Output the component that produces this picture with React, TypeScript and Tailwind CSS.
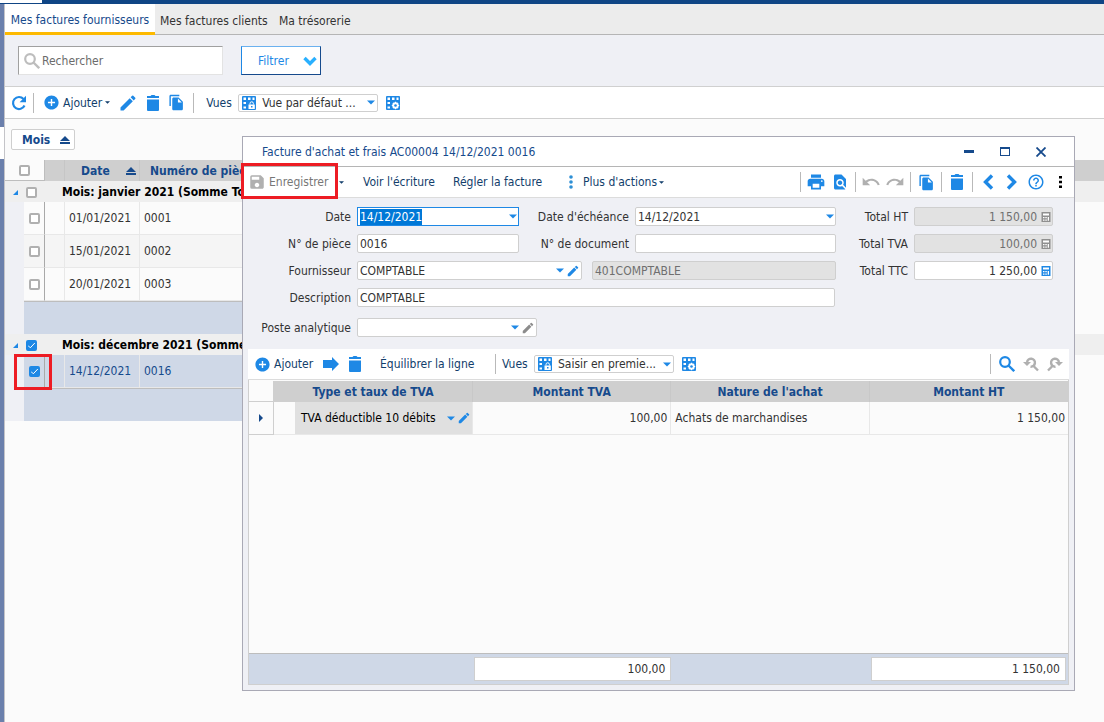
import { useEffect, useRef } from 'react';
import type { ReactNode } from 'react';
import {
  MdAddCircle,
  MdEdit,
  MdFileCopy,
  MdFindInPage,
  MdHelpOutline,
  MdPrint,
  MdRedo,
  MdSave,
  MdUndo,
} from 'react-icons/md';

const janvier = [
  { date: '01/01/2021', piece: '0001' },
  { date: '15/01/2021', piece: '0002' },
  { date: '20/01/2021', piece: '0003' },
];

function Caret({ className = '' }: { className?: string }) {
  return (
    <svg viewBox="0 0 8 5" className={`h-[5px] w-2 shrink-0 fill-current ${className}`}>
      <path d="M0 0.500h8L4 4.500z" />
    </svg>
  );
}

function SmallCaret() {
  return (
    <svg viewBox="0 0 6 3" className="h-[3px] w-[5px] shrink-0 fill-current">
      <path d="M0 0h6L3 3z" />
    </svg>
  );
}

function Trash() {
  return (
    <svg viewBox="0 0 14 16" className="h-4 w-3.5 fill-current">
      <path d="M1 1h3.500l1-1h3l1 1H13v2H1zM1 4.500h12V15a1 1 0 0 1-1 1H2a1 1 0 0 1-1-1z" />
    </svg>
  );
}

function Refresh() {
  return (
    <svg viewBox="0 0 16 16" className="size-4 fill-none stroke-current">
      <path d="M13.500 10.500A6 6 0 1 1 12.500 4" strokeWidth="2.200" />
      <path d="M15 0.800v6.400H8.600z" fill="currentColor" stroke="none" />
    </svg>
  );
}

function Magnifier() {
  return (
    <svg viewBox="0 0 16 16" className="size-4 shrink-0 fill-none stroke-current">
      <circle cx="6" cy="6" r="4.800" strokeWidth="2.200" />
      <path d="M9.500 9.500L15.200 15.200" strokeWidth="2.400" />
    </svg>
  );
}

function Chevron({ d, className = '' }: { d: string; className?: string }) {
  return (
    <svg viewBox="0 0 16 16" className={`size-4 shrink-0 fill-none stroke-current ${className}`}>
      <path d={d} strokeWidth="3.400" />
    </svg>
  );
}

function Dots({ className = '' }: { className?: string }) {
  return (
    <svg viewBox="0 0 4 14" className={`h-3.5 w-1 shrink-0 fill-current ${className}`}>
      <circle cx="2" cy="2" r="1.800" />
      <circle cx="2" cy="7" r="1.800" />
      <circle cx="2" cy="12" r="1.800" />
    </svg>
  );
}

function SortIcon() {
  return (
    <svg viewBox="0 0 10 8" className="h-2 w-2.5 shrink-0 fill-current">
      <path d="M5 0l5 5H0zM0 6h10v2H0z" />
    </svg>
  );
}

// Grid of cells with either a padlock or a cog in the bottom corner
function GridIcon({ kind }: { kind: 'lock' | 'cog' }) {
  return (
    <svg viewBox="0 0 14 14" className="size-3.5 shrink-0">
      <rect width="14" height="14" rx="1" fill="#1e88e5" />
      <path
        d="M1.500 1.500h2.500v2.500H1.500zM6 1.500h2.500v2.500H6zM10.500 1.500h2v2.500h-2zM1.500 6h2.500v2H1.500zM1.500 10.500h2.500v2H1.500z"
        fill="#fff"
      />
      {kind === 'lock' ? (
        <>
          <path d="M8 8.500V7.500a1.700 1.700 0 0 1 3.400 0v1" fill="none" stroke="#fff" strokeWidth="1" />
          <rect x="6.500" y="8.500" width="6.300" height="4.500" fill="#fff" />
          <rect x="9" y="10" width="1.500" height="1.500" fill="#1e88e5" />
        </>
      ) : (
        <>
          <circle cx="9.500" cy="9.500" r="2.300" fill="none" stroke="#fff" strokeWidth="1.800" />
          <path d="M9.500 5.800v7.400M5.800 9.500h7.400M7 7l5 5M12 7l-5 5" stroke="#fff" strokeWidth="1.200" />
          <circle cx="9.500" cy="9.500" r="1.300" fill="#1e88e5" />
        </>
      )}
    </svg>
  );
}

function Calculator({ className = '' }: { className?: string }) {
  return (
    <svg viewBox="0 0 10 10" className={`ml-0.5 size-2.5 shrink-0 ${className}`}>
      <path d="M0.500 0h9v10h-9z" fill="currentColor" />
      <path d="M2 1.500h6v2H2zM2 5h1.500v1.200H2zM4.300 5h1.500v1.200H4.300zM2 7.500h1.500v1.200H2zM4.300 7.500h1.500v1.200H4.300zM6.700 5H8v3.700H6.700z" fill="#fff" />
    </svg>
  );
}

function SearchTurn({ flip = false }: { flip?: boolean }) {
  return (
    <svg viewBox="0 0 16 16" className={`size-4 fill-none stroke-current ${flip ? '-scale-x-100' : ''}`}>
      <path d="M4 6a4 4 0 1 1 3.500 4.700M10 9.500L15 14.500" strokeWidth="2.400" />
      <path d="M0 6h8L4 10z" fill="currentColor" stroke="none" />
    </svg>
  );
}

function Separator({ className = '' }: { className?: string }) {
  return <span className={`h-5 w-px shrink-0 bg-[#b9b9b9] ${className}`} />;
}

function Check({ label, checked = false }: { label: string; checked?: boolean }) {
  return (
    <input
      type="checkbox"
      aria-label={label}
      defaultChecked={checked}
      className="block size-[11px] appearance-none rounded-xs border-2 border-[#b0b0b0] bg-white checked:border-[#1e88e5] checked:bg-[#1e88e5] checked:bg-[url('data:image/svg+xml,%3Csvg%20xmlns=%22http://www.w3.org/2000/svg%22%20viewBox=%220%200%207%207%22%3E%3Cpath%20d=%22M0%203.5l2.3%202.3L6.800%201%22%20fill=%22none%22%20stroke=%22white%22/%3E%3C/svg%3E')]"
    />
  );
}

function Label({ id, className, children }: { id: string; className: string; children: ReactNode }) {
  return (
    <label htmlFor={id} className={`shrink-0 pr-1.5 text-right text-[#333] ${className}`}>
      {children}
    </label>
  );
}

type FieldProps = {
  id: string;
  value?: string;
  width: string;
  disabled?: boolean;
  right?: boolean;
  label?: string;
  children?: ReactNode;
};

function Field({ id, value = '', width, disabled = false, right = false, label, children }: FieldProps) {
  return (
    <div
      className={`flex h-[19px] shrink-0 items-center gap-0.5 rounded-xs border border-[#cfcfcf] pr-px ${width} ${
        disabled ? 'bg-[#e2e2e2] text-[#6f6f6f]' : 'bg-white text-[#333]'
      }`}
    >
      <input
        id={id}
        type="text"
        aria-label={label}
        defaultValue={value}
        disabled={disabled}
        className={`h-4 w-full min-w-0 pl-0.5 outline-none ${right ? 'text-right' : ''}`}
      />
      {children}
    </div>
  );
}

function DateField() {
  const ref = useRef<HTMLInputElement>(null);

  useEffect(() => {
    ref.current?.focus();
    ref.current?.select();
  }, []);

  return (
    <div className="flex h-[19px] w-[162px] shrink-0 items-center gap-1 border border-[#1e88e5] bg-white pr-px">
      <input
        id="date"
        ref={ref}
        type="text"
        defaultValue="14/12/2021"
        className="h-4 w-full min-w-0 pl-0.5 text-[#333] outline-none selection:bg-[#0078d7] selection:text-white"
      />
      <Caret className="text-[#1e88e5]" />
    </div>
  );
}

function ViewSelect({ id, value }: { id: string; value: string }) {
  return (
    <div className="flex h-[18px] w-[140px] shrink-0 items-center gap-1.5 rounded-xs border border-[#cfcfcf] bg-white pr-0.5 pl-[3px]">
      <GridIcon kind="lock" />
      <select id={id} className="h-4 w-full min-w-0 appearance-none text-[#333] outline-none">
        <option>{value}</option>
      </select>
      <Caret className="text-[#1e88e5]" />
    </div>
  );
}

function GroupRow({ title, checked = false }: { title: string; checked?: boolean }) {
  return (
    <tr className="h-[21px] bg-[#efefef]">
      <td colSpan={3} className="p-0">
        <div className="flex items-center gap-2 pt-0.5 pl-2">
          <svg viewBox="0 0 6 6" className="size-[5px] fill-[#1e88e5]">
            <path d="M6 0v6H0z" />
          </svg>
          <Check label={title} checked={checked} />
        </div>
      </td>
      <td colSpan={3} className="p-0">
        <div className="-ml-[3px] whitespace-nowrap font-bold text-black">{title}</div>
      </td>
    </tr>
  );
}

function BandRow() {
  return (
    <tr className="h-[33px]">
      <td className="bg-[#eff0f5] p-0" />
      <td colSpan={4} className="border-t border-[#bdbdbd] bg-[#cfd8e7] p-0" />
      <td className="p-0" />
    </tr>
  );
}

type InvoiceRowProps = { date: string; piece: string; selected?: boolean; alt?: boolean };

function InvoiceRow({ date, piece, selected = false, alt = false }: InvoiceRowProps) {
  const bg = selected ? 'bg-[#cfd8e7] text-[#164a8c]' : alt ? 'bg-[#f5f5f5] text-[#333]' : 'bg-[#fbfbfb] text-[#333]';
  return (
    <tr className="h-[33px]">
      <td className="bg-[#eff0f5] p-0" />
      <td className={`relative border-r border-b border-r-[#a9a9a9] border-b-[#e8e8e8] p-0 ${bg}`}>
        <div className="flex justify-center">
          <Check label={`Facture ${piece}`} checked={selected} />
        </div>
        {selected && <span className="absolute -top-px -left-2.5 h-9 w-[38px] border-3 border-[#ed1c24]" />}
      </td>
      <td className={`border-r border-b border-[#e8e8e8] p-0 ${bg}`} />
      <td className={`border-r border-b border-[#e8e8e8] p-0 pl-1 ${bg}`}>{date}</td>
      <td className={`border-b border-[#e8e8e8] p-0 pl-1 ${bg}`}>{piece}</td>
      <td className="p-0" />
    </tr>
  );
}

function InvoiceTable() {
  return (
    <table className="w-full table-fixed border-separate border-spacing-0">
      <colgroup>
        <col className="w-[19px]" />
        <col className="w-[21px]" />
        <col className="w-5" />
        <col className="w-[75px]" />
        <col />
        <col className="w-16" />
      </colgroup>
      <thead>
        <tr className="h-[21px] bg-[#cfcfcf] text-left text-[#164a8c]">
          <th colSpan={2} className="border-r border-b border-[#bdbdbd] bg-[#fbfbfb] p-0">
            <div className="flex justify-center">
              <Check label="Tout sélectionner" />
            </div>
          </th>
          <th className="border-r border-[#c6c6c6] p-0" />
          <th className="border-r border-[#c6c6c6] p-0">
            <div className="flex items-center justify-between pr-[3px] pl-4">
              Date
              <SortIcon />
            </div>
          </th>
          <th colSpan={2} className="p-0 pl-2.5 whitespace-nowrap">
            Numéro de pièce
          </th>
        </tr>
      </thead>
      <tbody>
        <GroupRow title="Mois: janvier 2021 (Somme To" />
        {janvier.map((row, i) => (
          <InvoiceRow key={row.piece} {...row} alt={i % 2 === 1} />
        ))}
        <BandRow />
        <GroupRow title="Mois: décembre 2021 (Somme" checked />
        <InvoiceRow date="14/12/2021" piece="0016" selected />
        <BandRow />
      </tbody>
    </table>
  );
}

function TitleBar() {
  return (
    <header className="flex h-[30px] items-center border-b border-[#b5b5b5] bg-white pr-[27px] pl-[19px] text-[#164a8c]">
      <h2 className="flex-1">Facture d'achat et frais AC00004 14/12/2021 0016</h2>
      <div className="flex items-center gap-6">
        <button type="button" aria-label="Réduire" className="flex w-3 justify-center">
          <span className="h-[3px] w-2.5 bg-current" />
        </button>
        <button type="button" aria-label="Agrandir" className="flex w-3 justify-center">
          <span className="h-[9px] w-2.5 border border-t-2 border-current" />
        </button>
        <button type="button" aria-label="Fermer" className="flex w-3 justify-center">
          <svg viewBox="0 0 10 10" className="size-2.5 fill-none stroke-current">
            <path d="M0.500 0.500l9 9M9.500 0.500l-9 9" strokeWidth="1.800" />
          </svg>
        </button>
      </div>
    </header>
  );
}

function ToolButton({ label, className = '', children }: { label: string; className?: string; children: ReactNode }) {
  return (
    <button type="button" aria-label={label} className={`flex w-6 shrink-0 items-center justify-center ${className}`}>
      {children}
    </button>
  );
}

function DialogToolbar() {
  return (
    <div className="flex h-[31px] items-center border-b border-[#dcdcdc] bg-white pr-0.5 pl-[5px] text-[#123e6b]">
      <div className="relative flex items-center">
        <button type="button" className="flex w-[86px] items-center gap-[3px] text-[#777]">
          <MdSave className="size-[18px] shrink-0 text-[#b0b0b0]" />
          Enregistrer
        </button>
        <span className="absolute -top-2.5 -left-[7px] h-9 w-[97px] border-3 border-[#ed1c24]" />
      </div>
      <button type="button" aria-label="Options d'enregistrement" className="ml-[5px]">
        <SmallCaret />
      </button>
      <div className="ml-[19px] flex flex-1 items-center">
        <button type="button" className="w-[90px] text-left whitespace-nowrap">Voir l'écriture</button>
        <button type="button" className="w-[116px] text-left whitespace-nowrap">Régler la facture</button>
        <button type="button" className="flex items-center gap-2.5 whitespace-nowrap">
          <Dots className="text-[#2d8fd5]" />
          <span className="flex items-center gap-0.5">
            Plus d'actions
            <SmallCaret />
          </span>
        </button>
      </div>
      <div className="flex items-center text-[#1e88e5]">
        <Separator className="mx-[3px]" />
        <ToolButton label="Imprimer"><MdPrint className="size-5" /></ToolButton>
        <ToolButton label="Aperçu"><MdFindInPage className="size-[18px]" /></ToolButton>
        <Separator className="mx-[3px]" />
        <ToolButton label="Annuler" className="text-[#b0b0b0]"><MdUndo className="size-5" /></ToolButton>
        <ToolButton label="Rétablir" className="text-[#b0b0b0]"><MdRedo className="size-5" /></ToolButton>
        <Separator className="mx-[3px]" />
        <ToolButton label="Dupliquer"><MdFileCopy className="size-[17px]" /></ToolButton>
        <Separator className="mx-[3px]" />
        <ToolButton label="Supprimer"><Trash /></ToolButton>
        <Separator className="mx-[3px]" />
        <ToolButton label="Précédent"><Chevron d="M12 1.500L5.500 8l6.500 6.500" /></ToolButton>
        <ToolButton label="Suivant"><Chevron d="M4 1.500L10.500 8L4 14.500" /></ToolButton>
        <ToolButton label="Aide"><MdHelpOutline className="size-[18px]" /></ToolButton>
        <ToolButton label="Plus" className="text-black">
          <svg viewBox="0 0 3 12" className="h-3 w-[3px] fill-current">
            <path d="M0 0h3v2.500H0zM0 4.700h3v2.500H0zM0 9.500h3V12H0z" />
          </svg>
        </ToolButton>
      </div>
    </div>
  );
}

function InvoiceForm() {
  return (
    <form className="flex pt-[9px] pb-3">
      <div>
        <div className="flex flex-col gap-2">
          <div className="flex items-center">
            <Label id="date" className="w-[114px]">Date</Label>
            <DateField />
            <Label id="echeance" className="w-[116px]">Date d'échéance</Label>
            <Field id="echeance" value="14/12/2021" width="w-[201px]">
              <Caret className="text-[#1e88e5]" />
            </Field>
          </div>
          <div className="flex items-center">
            <Label id="piece" className="w-[114px]">N° de pièce</Label>
            <Field id="piece" value="0016" width="w-[162px]" />
            <Label id="document" className="w-[116px]">N° de document</Label>
            <Field id="document" width="w-[201px]" />
          </div>
          <div className="flex items-center">
            <Label id="fournisseur" className="w-[114px]">Fournisseur</Label>
            <Field id="fournisseur" value="COMPTABLE" width="w-[225px]">
              <Caret className="text-[#1e88e5]" />
              <MdEdit className="size-3.5 shrink-0 text-[#1e88e5]" />
            </Field>
            <div className="w-2.5" />
            <Field id="compte" label="Compte fournisseur" value="401COMPTABLE" width="w-[244px]" disabled />
          </div>
          <div className="flex items-center">
            <Label id="description" className="w-[114px]">Description</Label>
            <Field id="description" value="COMPTABLE" width="w-[478px]" />
          </div>
        </div>
        <div className="mt-[11px] flex items-center">
          <Label id="poste" className="w-[114px]">Poste analytique</Label>
          <Field id="poste" width="w-[180px]">
            <Caret className="text-[#1e88e5]" />
            <MdEdit className="size-3.5 shrink-0 text-[#8c8c8c]" />
          </Field>
        </div>
      </div>
      <div className="flex flex-col gap-2">
        <div className="flex items-center">
          <Label id="ht" className="w-[78px]">Total HT</Label>
          <Field id="ht" value="1 150,00" width="w-[139px]" right disabled>
            <Calculator className="text-[#8f8f8f]" />
          </Field>
        </div>
        <div className="flex items-center">
          <Label id="tva" className="w-[78px]">Total TVA</Label>
          <Field id="tva" value="100,00" width="w-[139px]" right disabled>
            <Calculator className="text-[#8f8f8f]" />
          </Field>
        </div>
        <div className="flex items-center">
          <Label id="ttc" className="w-[78px]">Total TTC</Label>
          <Field id="ttc" value="1 250,00" width="w-[139px]" right>
            <Calculator className="text-[#1e88e5]" />
          </Field>
        </div>
      </div>
    </form>
  );
}

function LinesToolbar() {
  return (
    <div className="flex h-[31px] items-center border-b border-[#dcdcdc] bg-white pr-1.5 pl-1.5 text-[#123e6b]">
      <button type="button" className="flex w-[69px] items-center gap-[3px]">
        <MdAddCircle className="size-[17px] shrink-0 text-[#1e88e5]" />
        Ajouter
      </button>
      <button type="button" aria-label="Insérer" className="text-[#1e88e5]">
        <svg viewBox="0 0 16 14" className="h-3.5 w-4 fill-current">
          <path d="M0 3h9V0l7 7-7 7v-3H0z" />
        </svg>
      </button>
      <button type="button" aria-label="Supprimer la ligne" className="ml-[9px] text-[#1e88e5]"><Trash /></button>
      <button type="button" className="ml-[18px] w-[115px] text-left whitespace-nowrap">Équilibrer la ligne</button>
      <Separator />
      <label htmlFor="vues-lignes" className="w-[38px] pl-1.5">Vues</label>
      <ViewSelect id="vues-lignes" value="Saisir en premie..." />
      <button type="button" aria-label="Configurer la vue" className="ml-2"><GridIcon kind="cog" /></button>
      <div className="ml-auto flex items-center gap-2 text-[#b0b0b0]">
        <Separator />
        <button type="button" aria-label="Rechercher" className="text-[#1e88e5]"><Magnifier /></button>
        <button type="button" aria-label="Recherche précédente"><SearchTurn /></button>
        <button type="button" aria-label="Recherche suivante"><SearchTurn flip /></button>
      </div>
    </div>
  );
}

function LinesTable() {
  return (
    <table className="mt-px w-full table-fixed border-separate border-spacing-0">
      <colgroup>
        <col className="w-[25px]" />
        <col className="w-[21px]" />
        <col className="w-[178px]" />
        <col />
        <col />
        <col />
      </colgroup>
      <thead>
        <tr className="h-[21px] bg-[#cfcfcf] text-[#164a8c]">
          <th className="border-r border-b border-[#cfcfcf] bg-[#fbfbfb] p-0" />
          <th colSpan={2} className="border-r border-[#c8c8c8] p-0">Type et taux de TVA</th>
          <th className="border-r border-[#c8c8c8] p-0">Montant TVA</th>
          <th className="border-r border-[#c8c8c8] p-0">Nature de l'achat</th>
          <th className="p-0">Montant HT</th>
        </tr>
      </thead>
      <tbody>
        <tr className="h-[33px] text-[#333]">
          <td className="border-r border-b border-[#cfcfcf] p-0">
            <svg viewBox="0 0 4 8" className="mx-auto h-2 w-1 fill-[#164a8c]">
              <path d="M0 0l4 4-4 4z" />
            </svg>
          </td>
          <td className="border-b border-[#e8e8e8] p-0" />
          <td className="border-r border-b border-[#e8e8e8] bg-[#e0e0e0] p-0 text-black">
            <div className="flex items-center justify-between pr-px pl-1.5 whitespace-nowrap">
              TVA déductible 10 débits
              <span className="flex items-center gap-0.5 text-[#1e88e5]">
                <Caret />
                <MdEdit className="size-3.5" />
              </span>
            </div>
          </td>
          <td className="border-r border-b border-[#e8e8e8] p-0 pr-[3px] text-right">100,00</td>
          <td className="border-r border-b border-[#e8e8e8] p-0 pl-1">Achats de marchandises</td>
          <td className="border-b border-[#e8e8e8] p-0 pr-[3px] text-right">1 150,00</td>
        </tr>
      </tbody>
    </table>
  );
}

function InvoiceDialog() {
  return (
    <section
      role="dialog"
      aria-label="Facture d'achat et frais"
      className="absolute top-[136px] right-[29px] bottom-[31px] left-[242px] flex flex-col border border-[#a9a9b5] bg-[#eff0f5]"
    >
      <TitleBar />
      <DialogToolbar />
      <InvoiceForm />
      <div className="mx-[5px] mb-[5px] flex flex-1 flex-col">
        <LinesToolbar />
        <div className="flex flex-1 flex-col border border-t-0 border-[#cfcfcf] bg-[#fbfbfb]">
          <LinesTable />
          <div className="mt-auto grid h-[31px] grid-cols-[224px_1fr_1fr_1fr] items-center border-t border-[#bdbdbd] bg-[#cfd8e7] text-right text-[#333]">
            <span />
            <output className="ml-px border border-[#cfcfcf] bg-white pr-[5px] leading-[22px]">100,00</output>
            <span />
            <output className="mr-0.5 ml-px border border-[#cfcfcf] bg-white pr-[5px] leading-[22px]">1 150,00</output>
          </div>
        </div>
      </div>
    </section>
  );
}

export default function App() {
  return (
    <div className="relative flex min-h-screen flex-col bg-[#fbfbfb] font-['DejaVu_Sans_Condensed','Noto_Sans',sans-serif] text-[12px] leading-4">
      <div className="h-1 bg-[#0f4585]">
        <div className="h-[3px] w-[42px] bg-white" />
      </div>
      <div className="flex flex-1">
        <div className="w-[5px] shrink-0 border-r border-[#c4c4c8] bg-[#6b80ac] pt-[123px]">
          <div className="h-8 bg-white" />
        </div>
        <div className="flex min-w-0 flex-1 flex-col">
          <nav className="flex h-[31px] border-b border-[#b5b5b5] bg-[#ececec] text-[#333]">
            <a href="#fournisseurs" className="flex h-[31px] w-[150px] items-center justify-center border-b-3 border-[#fdb900] bg-white pt-[3px] whitespace-nowrap text-[#164a8c]">
              Mes factures fournisseurs
            </a>
            <a href="#clients" className="flex w-[119px] items-center pt-[3px] pl-[5px] whitespace-nowrap">Mes factures clients</a>
            <a href="#tresorerie" className="flex items-center pt-[3px] pl-[5px]">Ma trésorerie</a>
          </nav>
          <div className="flex h-[52px] items-center gap-[18px] border-b border-[#d0d0d0] bg-[#eff0f5] pl-[13px]">
            <div className="flex h-[29px] w-[205px] items-center gap-0.5 border border-t-[#a0a0a0] border-r-[#e3e3e3] border-b-[#e3e3e3] border-l-[#a0a0a0] bg-white pl-[5px] text-[#bdbdbd]">
              <Magnifier />
              <input type="text" aria-label="Rechercher" placeholder="Rechercher" className="w-full min-w-0 text-[#333] outline-none placeholder:text-[#6b6b6b]" />
            </div>
            <button type="button" className="flex h-[29px] w-20 items-center justify-between border border-t-[#6bb1ef] border-r-[#164a8c] border-b-[#164a8c] border-l-[#1e88e5] bg-white pr-0.5 pl-4 text-[#1e88e5]">
              Filtrer
              <Chevron d="M2.500 5L8 10.500L13.500 5" className="text-[#29b0ff]" />
            </button>
          </div>
          <div className="flex h-8 items-center border-b border-[#cfcfcf] bg-white pl-1.5 text-[#123e6b]">
            <button type="button" aria-label="Actualiser" className="mr-1.5 text-[#1e88e5]"><Refresh /></button>
            <Separator />
            <button type="button" className="ml-[9px] flex items-center gap-[3px]">
              <MdAddCircle className="size-[17px] shrink-0 text-[#1e88e5]" />
              Ajouter
              <SmallCaret />
            </button>
            <div className="ml-2 flex items-center gap-2 text-[#1e88e5]">
              <button type="button" aria-label="Modifier"><MdEdit className="size-5" /></button>
              <button type="button" aria-label="Supprimer"><Trash /></button>
              <button type="button" aria-label="Dupliquer"><MdFileCopy className="size-[17px]" /></button>
              <Separator />
            </div>
            <label htmlFor="vues" className="w-11 pl-3">Vues</label>
            <ViewSelect id="vues" value="Vue par défaut ..." />
            <button type="button" aria-label="Configurer la vue" className="ml-2"><GridIcon kind="cog" /></button>
          </div>
          <div className="flex h-[41px] items-center pl-1.5">
            <button type="button" className="flex h-[21px] w-16 items-center justify-between rounded-xs border border-[#cfcfcf] bg-white pr-1 pl-2.5 font-bold text-[#164a8c]">
              Mois
              <SortIcon />
            </button>
          </div>
          <InvoiceTable />
        </div>
      </div>
      <InvoiceDialog />
    </div>
  );
}
